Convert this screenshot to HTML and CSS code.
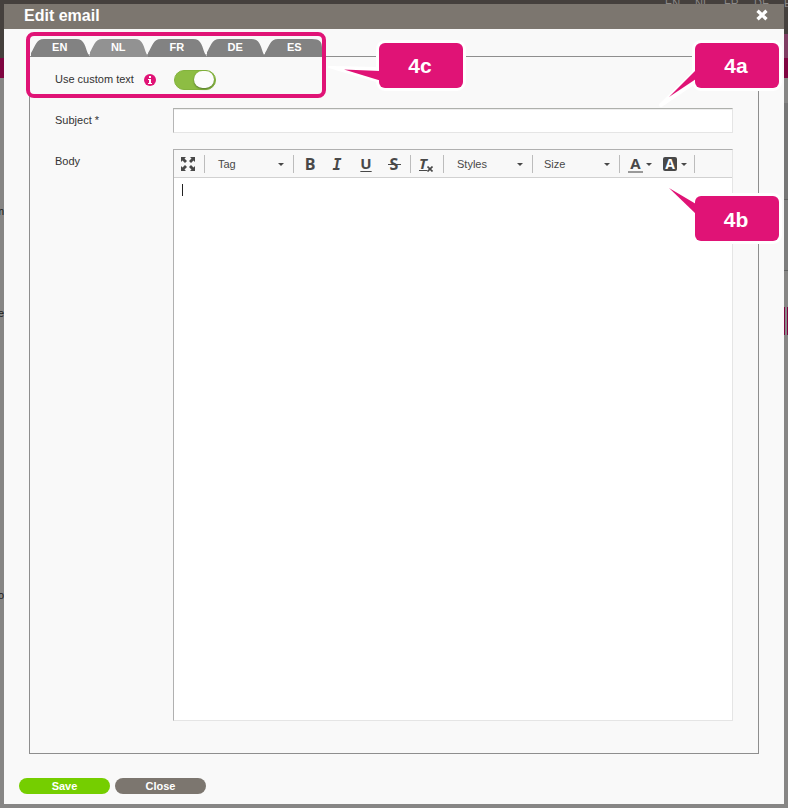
FILE: index.html
```html
<!DOCTYPE html>
<html lang="en">
<head>
<meta charset="utf-8">
<title>Edit email</title>
<link rel="stylesheet" href="styles.css">
</head>
<body>
<div class="backdrop" aria-hidden="true">
  <div class="page-top"><span>EN</span><span>NL</span><span>FR</span><span>DE</span><span>ES</span></div>
  <div class="page-band"></div>
  <div class="page-promo"></div>
  <div class="page-panel"></div>
  <div class="page-card"></div>
  <div class="page-button"></div>
  <span class="page-text text-one">m</span>
  <span class="page-text text-two">e</span>
  <span class="page-text text-three">o</span>
</div>
<main class="dialog">
  <header class="dialog-header">
    <h1>Edit email</h1>
    <svg class="close" width="12" height="12" viewBox="0 0 12 12"><path d="M1.500 1.800l9 8.400M10.500 1.800l-9 8.400" stroke="#fff" stroke-width="3.300"/></svg>
  </header>
  <section class="form">
    <nav class="tabs">
      <a class="tab">EN</a><a class="tab active">NL</a><a class="tab">FR</a><a class="tab">DE</a><a class="tab">ES</a>
    </nav>
    <div class="row row-custom">
      <label>Use custom text</label>
      <svg class="info" width="12" height="12" viewBox="0 0 12 12"><circle cx="6" cy="6" r="6" fill="#e01376"/><path d="M5 2h2v2H5zM4 5h3v4h1v1H4V9h1V6H4z" fill="#fff"/></svg>
      <span class="switch"><span class="knob"></span></span>
    </div>
    <div class="row row-subject">
      <label>Subject *</label>
      <div class="input"></div>
    </div>
    <div class="row row-body">
      <label>Body</label>
      <div class="editor">
        <div class="toolbar">
          <div class="group g-max">
            <svg width="14" height="14" viewBox="0 0 14 14"><path d="M0 0h5L3.500 1.500 6 4 4 6 1.500 3.500 0 5zM14 0v5l-1.500-1.500L10 6 8 4l2.500-2.500L9 0zM0 14V9l1.500 1.500L4 8l2 2-2.500 2.500L5 14zM14 14H9l1.500-1.500L8 10l2-2 2.500 2.500L14 9z" fill="#484848"/></svg>
          </div>
          <div class="group combo g-tag"><span>Tag</span><i class="caret"></i></div>
          <div class="group g-style"><span class="glyph bold">B</span><span class="glyph italic">I</span><span class="glyph underline">U</span><span class="glyph strike">S</span></div>
          <div class="group g-clear"><span class="clear">T</span><svg class="clear-x" width="6" height="6" viewBox="0 0 6 6"><path d="M.5.5l5 5M5.500.5l-5 5" stroke="#484848" stroke-width="1.600"/></svg></div>
          <div class="group combo g-styles"><span>Styles</span><i class="caret"></i></div>
          <div class="group combo g-size"><span>Size</span><i class="caret"></i></div>
          <div class="group g-color"><span class="text-color">A</span><i class="caret"></i><span class="bg-color">A</span><i class="caret"></i></div>
        </div>
        <div class="content"><span class="cursor"></span></div>
      </div>
    </div>
  </section>
  <footer class="actions"><button class="save">Save</button><button class="cancel">Close</button></footer>
</main>
<svg class="callouts" width="788" height="808" viewBox="0 0 788 808">
  <g stroke="#fff" stroke-width="6" stroke-linejoin="round" fill="#fff">
    <path d="M380 68L329 67L380 82z" stroke-width="2"/>
    <path d="M696 71L661 105L696 81z" stroke-width="4"/>
    <path d="M696 203L669 188L696 215z" stroke-width="2"/>
    <rect x="379" y="43" width="84" height="45" rx="6"/>
    <rect x="695" y="43" width="84" height="45" rx="6"/>
    <rect x="695" y="196" width="84" height="45" rx="6"/>
  </g>
  <g fill="#e01376">
    <path d="M380 71L344 69.500L380 80.500z"/>
    <path d="M696 70L669 97L696 79z"/>
    <path d="M696 204L669 188L696 214z"/>
    <rect x="379" y="43" width="84" height="45" rx="6"/>
    <rect x="695" y="43" width="84" height="45" rx="6"/>
    <rect x="695" y="196" width="84" height="45" rx="6"/>
  </g>
  <g class="callout-text">
    <text x="420" y="73">4c</text><text x="736" y="73">4a</text><text x="736" y="227">4b</text>
  </g>
</svg>
<div class="highlight"></div>
</body>
</html>
```
FILE: styles.css
```css
* { box-sizing: border-box; }
body { margin: 0; width: 788px; height: 808px; overflow: hidden; position: relative; padding: 4px; background: #878685; color: #333; font: 11px/14px "Liberation Sans", Arial, sans-serif; }
.backdrop { position: absolute; inset: 0; overflow: hidden; }
.page-top { height: 58px; background: #45403d; color: #8c8988; position: relative; }
.page-top span { position: absolute; top: -4px; left: 665px; font-size: 11px; line-height: 14px; }
.page-top span:nth-child(2) { left: 695px; }
.page-top span:nth-child(3) { left: 724px; }
.page-top span:nth-child(4) { left: 754px; }
.page-top span:nth-child(5) { left: 784px; }
.page-band { height: 20px; background: #7f0541; }
.page-promo { position: absolute; right: 0; top: 34px; width: 4px; height: 24px; background: #7f3e63; }
.page-panel { position: absolute; right: 0; top: 103px; width: 4px; height: 96px; background: #777; }
.page-card { position: absolute; right: 0; top: 199px; width: 4px; height: 72px; border: solid #616161; border-width: 1px 0; background: #7e7e7e; }
.page-button { position: absolute; right: 0; top: 307px; width: 4px; height: 28px; background: #888; border: solid #7f0541; border-width: 0 1px; }
.page-text { position: absolute; color: #1b1b1b; }
.text-one { left: -5px; top: 204px; }
.text-two { left: -2px; top: 306px; }
.text-three { left: -2px; top: 588px; }
.dialog { position: relative; width: 780px; height: 800px; background: #f9f9f9; }
.dialog-header { height: 25px; padding: 0 16px 2px 20px; display: flex; align-items: center; justify-content: space-between; background: #7c766f; color: #fff; }
.close { margin-bottom: 2px; }
h1 { margin: 0; font-size: 16px; line-height: 20px; font-weight: bold; }
.form { width: 730px; height: 698px; margin: 27px 0 0 25px; border: 1px solid #8e8e8e; }
.tabs { display: flex; width: 291px; height: 18px; margin: -18px 0 0 1px; }
.tab { width: 58.500px; height: 18px; flex: none; color: #fff; font-weight: bold; text-align: center; line-height: 17px; padding-right: 1px; background: #828282; clip-path: path("M0 18V14C4 8 5 0 13 0H45C54 0 54 8 57.3 15.5L58.5 15V18Z"); }
.tab.active { background: #929292; }
.tab:last-child { width: 56.500px; padding: 0 0 0 2px; clip-path: path("M0 18V14C4 8 5 0 13 0H47C55 0 57 3 57 9V18Z"); }
.row { display: flex; padding-left: 25px; }
.row label { width: 118px; flex: none; }
.row-custom { height: 20px; margin-top: 13px; align-items: center; }
.row-custom label { width: 89px; padding-bottom: 2px; }
.info { margin-right: 18px; }
.switch { width: 42px; height: 20px; border-radius: 10px; background: #8dbd43; border: 1px solid #83b33c; display: flex; justify-content: flex-end; padding-right: 1px; }
.knob { width: 20px; height: 17px; border-radius: 9px; background: #fcfcfc; box-shadow: 0 1px 2px #53752c; }
.row-subject { margin-top: 18px; height: 25px; align-items: center; }
.row-subject label { padding-bottom: 1px; }
.input { width: 560px; height: 25px; background: #fff; border: 1px solid #e5e5e5; border-top-color: #aeb0ac; border-left-color: #b6b6b6; box-shadow: inset 0 1px #eee; }
.row-body { margin-top: 16px; }
.row-body label { padding-top: 5px; }
.editor { width: 560px; height: 572px; border: 1px solid #e5e5e5; border-top-color: #b0b0b0; border-left-color: #b0b0b0; background: #fff; }
.toolbar { height: 28px; border-bottom: 1px solid #d1d1d1; background: #f8f8f8; padding: 5px 0; display: flex; color: #484848; }
.group { height: 18px; flex: none; display: flex; align-items: center; border-right: 1px solid #bcbcbc; }
.g-max { width: 31px; padding-left: 7px; }
.combo { padding: 0 9px 0 13px; justify-content: space-between; }
.g-tag { width: 89px; }
.g-styles { width: 89px; }
.g-size { width: 87px; padding-left: 11px; }
.caret { border: 3px solid transparent; border-top-color: #484848; border-bottom: 0; flex: none; }
.g-style { width: 117px; padding-left: 2px; }
.glyph { width: 28px; text-align: center; font: bold 16px/18px "Open Sans", sans-serif; padding-bottom: 1px; }
.glyph.italic { font: italic bold 15px/18px "DejaVu Sans Mono", monospace; padding: 1px 2px 0 0; }
.glyph.underline { text-decoration: underline; text-decoration-thickness: 1px; text-underline-offset: 2px; font-size: 15px; padding-bottom: 2px; }
.glyph.strike { background: linear-gradient(#484848, #484848) center 9px / 13px 1px no-repeat; }
.g-clear { width: 33px; padding-left: 8px; }
.clear { width: 9px; font: italic bold 15px/18px "Open Sans", sans-serif; text-decoration: underline; text-decoration-thickness: 1px; text-underline-offset: 1px; padding-bottom: 2px; }
.clear-x { margin: 10px 0 0 -1px; }
.g-color { width: 75px; padding-left: 8px; }
.text-color { width: 15px; height: 17px; border-bottom: 2px solid #999; text-align: center; font: bold 15px/14px "Open Sans", sans-serif; margin-right: 3px; }
.bg-color { width: 14px; height: 14px; border-radius: 2px; background: #484848; color: #fff; text-align: center; font: bold 14px/14px "Open Sans", sans-serif; margin: 0 4px 0 11px; }
.content { padding: 6px 8px; }
.cursor { display: block; width: 1px; height: 12px; background: #222; }
.actions { display: flex; gap: 5px; margin: 24px 0 0 15px; }
.actions button { width: 91px; height: 16px; padding: 0; border: 0; border-radius: 8px; color: #fff; font: bold 11px/16px "Liberation Sans", Arial, sans-serif; }
.save { background: #75ce00; }
.cancel { background: #7c766f; }
.highlight { position: absolute; left: 26px; top: 32px; width: 300px; height: 66px; border: 4px solid #e01376; border-radius: 8px; }
.callouts { position: absolute; left: 0; top: 0; pointer-events: none; }
.callout-text { fill: #fff; font: bold 21px "Liberation Sans", Arial, sans-serif; text-anchor: middle; }
```
